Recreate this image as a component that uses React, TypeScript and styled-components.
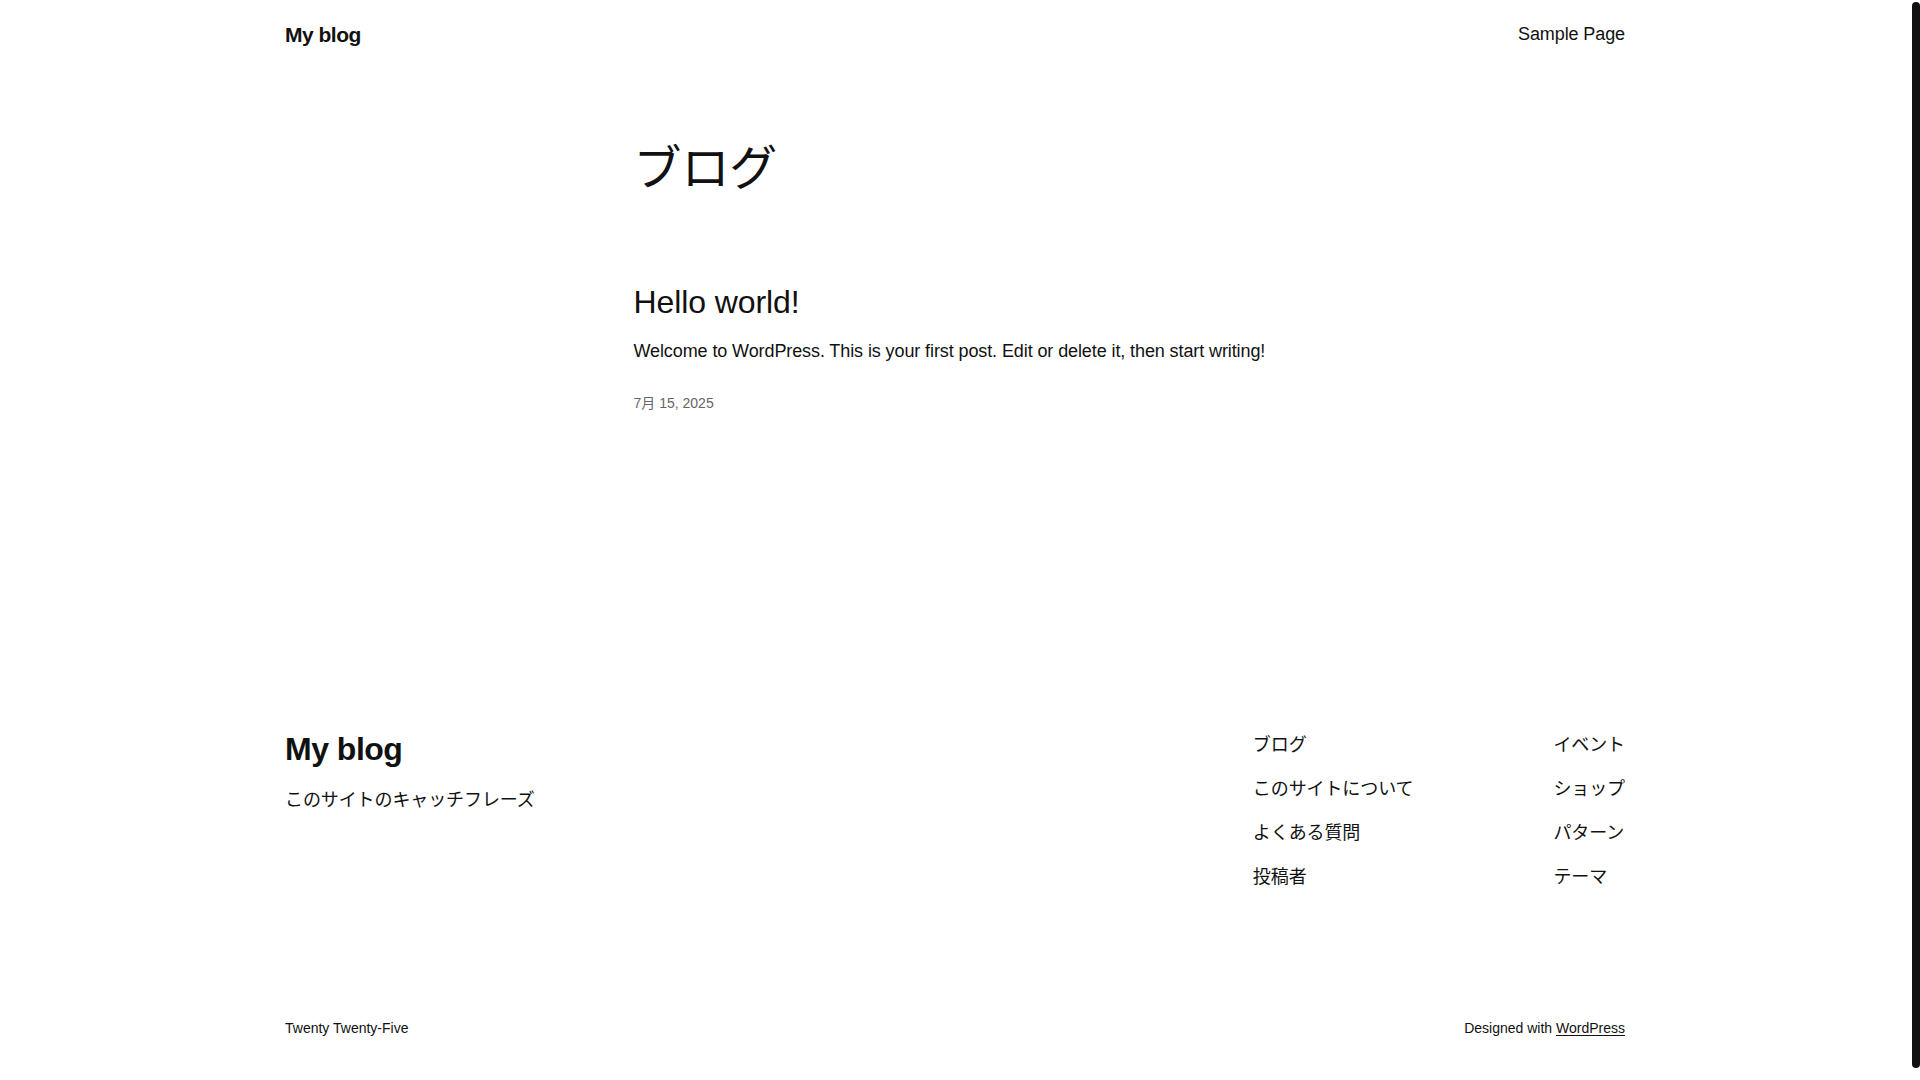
import styled, { createGlobalStyle } from "styled-components"

const GlobalStyle = createGlobalStyle`
  body {
    margin: 0;
    background: #fff;
    color: #111;
    font-family: "Liberation Sans", "Noto Sans CJK JP", sans-serif;
    font-size: 18px;
    letter-spacing: -0.1px;
  }
  a {
    color: inherit;
    text-decoration: none;
  }
`

const footerLeft = ["ブログ", "このサイトについて", "よくある質問", "投稿者"]
const footerRight = ["イベント", "ショップ", "パターン", "テーマ"]

export const App = () => {
  return (
    <Page>
      <GlobalStyle />
      <Viewport>
        <Header>
          <SiteTitle href="#">My blog</SiteTitle>
          <NavLink href="#">Sample Page</NavLink>
        </Header>

        <Main>
          <PageTitle>ブログ</PageTitle>
          <Post>
            <PostTitle>Hello world!</PostTitle>
            <PostExcerpt>
              Welcome to WordPress. This is your first post. Edit or delete it, then start writing!
            </PostExcerpt>
            <PostDate>7月 15, 2025</PostDate>
          </Post>
        </Main>

        <Footer>
          <FooterTop>
            <Brand>
              <FooterTitle href="#">My blog</FooterTitle>
              <Tagline>このサイトのキャッチフレーズ</Tagline>
            </Brand>
            <FooterNav>
              <NavColumn>
                {footerLeft.map((label) => (
                  <NavLink key={label} href="#">{label}</NavLink>
                ))}
              </NavColumn>
              <NavColumn>
                {footerRight.map((label) => (
                  <NavLink key={label} href="#">{label}</NavLink>
                ))}
              </NavColumn>
            </FooterNav>
          </FooterTop>
          <FooterBottom>
            <SmallText>Twenty Twenty-Five</SmallText>
            <SmallText>
              Designed with <Underlined href="#">WordPress</Underlined>
            </SmallText>
          </FooterBottom>
        </Footer>
      </Viewport>
      {/* browser scrollbar as seen in the screenshot */}
      <ScrollRail>
        <ScrollThumb />
      </ScrollRail>
    </Page>
  )
}
export default App

const Page = styled.div`
  display: flex;
  min-height: 1080px;
  overflow: hidden;
`

const Viewport = styled.div`
  flex: 1;
  min-width: 0;
  display: flex;
  flex-direction: column;
`

const ScrollRail = styled.div`
  width: 10px;
  flex-shrink: 0;
  display: flex;
  justify-content: flex-end;
  padding-top: 2px;
`

const ScrollThumb = styled.div`
  width: 8px;
  height: 1066px;
  background: #111;
  border-radius: 4px;
`

const Wide = styled.div`
  width: 100%;
  max-width: 1340px;
  margin: 0 auto;
  box-sizing: border-box;
`

const Header = styled(Wide)`
  display: flex;
  align-items: center;
  justify-content: space-between;
  height: 70px;
`

const SiteTitle = styled.a`
  font-size: 21px;
  font-weight: 700;
  letter-spacing: -0.5px;
  line-height: 1.4;
`

const NavLink = styled.a`
  font-size: 18px;
  line-height: 1.4;
  display: block;
`

const Main = styled.main`
  width: 645px;
  margin: 0 auto;
  padding-top: 70px;
  padding-left: 1px;
  box-sizing: border-box;
`

const PageTitle = styled.h1`
  margin: 0;
  font-size: 48px;
  font-weight: 400;
  line-height: 1.2;
`

const Post = styled.article`
  display: flex;
  flex-direction: column;
  padding-top: 85px;
`

const PostTitle = styled.h2`
  margin: 0;
  font-size: 32px;
  font-weight: 400;
  line-height: 1.2;
`

const PostExcerpt = styled.p`
  margin: 18px 0 0;
  font-size: 18px;
  line-height: 1.4;
`

const PostDate = styled.div`
  margin-top: 30px;
  font-size: 14px;
  line-height: 1.4;
  letter-spacing: normal;
  color: #666;
`

const Footer = styled(Wide)`
  padding-top: 316px;
  padding-bottom: 40px;
`

const FooterTop = styled.div`
  display: flex;
  justify-content: space-between;
  align-items: flex-start;
`

const Brand = styled.div`
  display: flex;
  flex-direction: column;
  gap: 19.5px;
`

const FooterTitle = styled.a`
  font-size: 32px;
  font-weight: 700;
  letter-spacing: -0.5px;
  line-height: 1.2;
`

const Tagline = styled.p`
  margin: 0;
  font-size: 18px;
  line-height: 1.4;
`

const FooterNav = styled.nav`
  display: flex;
  gap: 140px;
  padding-top: 3.5px;
`

const NavColumn = styled.div`
  display: flex;
  flex-direction: column;
  gap: 18.8px;
`

const FooterBottom = styled.div`
  display: flex;
  justify-content: space-between;
  align-items: center;
  margin-top: 129px;
`

const SmallText = styled.p`
  margin: 0;
  font-size: 14px;
  line-height: 1.4;
  letter-spacing: normal;
`

const Underlined = styled.a`
  text-decoration: underline;
  text-underline-offset: 2px;
`
